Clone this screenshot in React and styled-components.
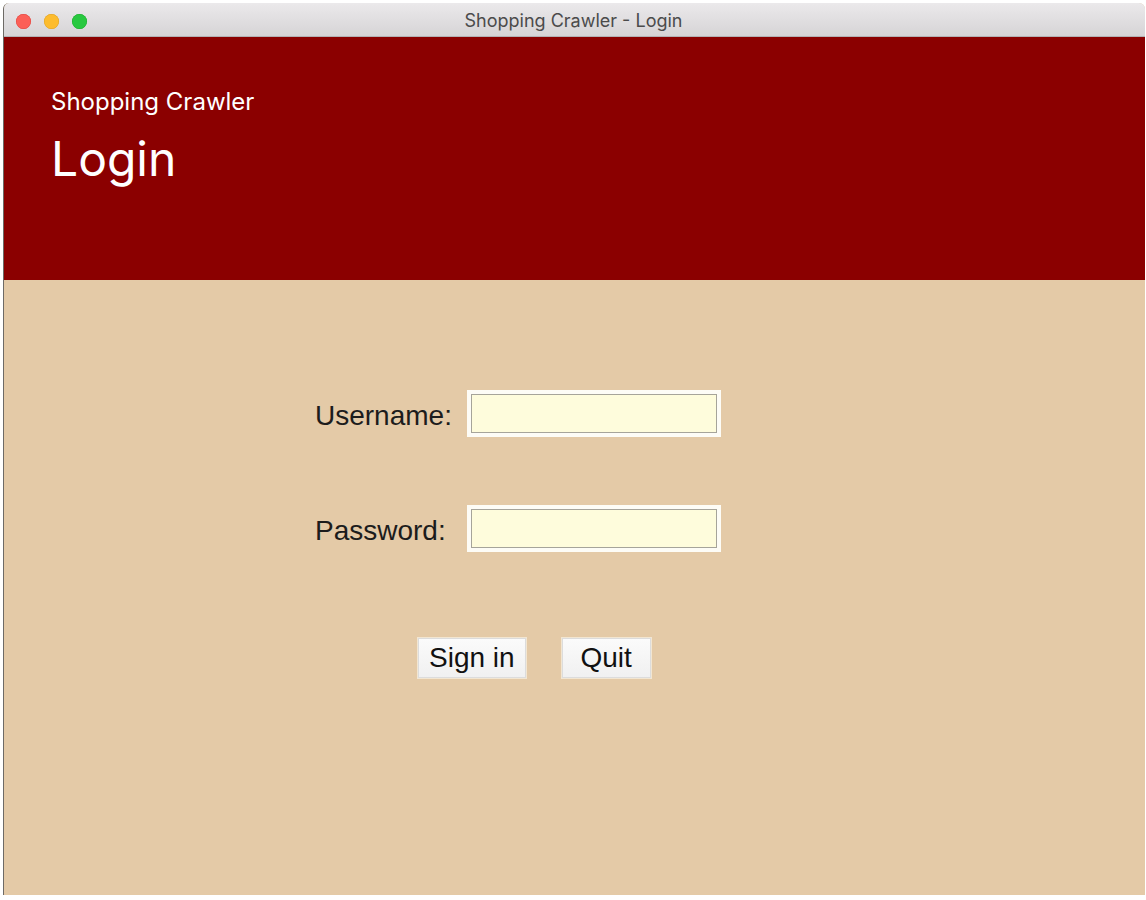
import React from 'react';
import styled, { createGlobalStyle } from 'styled-components';

const GlobalStyle = createGlobalStyle`
  html, body {
    margin: 0;
    padding: 0;
    background: #ffffff;
  }
  body {
    font-family: "Liberation Sans", Arial, sans-serif;
  }
`

const App = () => {
  return (
    <>
      <GlobalStyle />
      <Page>
        <Window>
          <TitleBar>
            <Lights>
              <Light color="#fc5f57" border="#e0443e" />
              <Light color="#fdbc2e" border="#dea123" />
              <Light color="#28c840" border="#1aab29" />
            </Lights>
            <Title>Shopping Crawler - Login</Title>
          </TitleBar>
          <Header>
            <AppName>Shopping Crawler</AppName>
            <PageTitle>Login</PageTitle>
          </Header>
          <Body>
            <Form>
              <Label>Username:</Label>
              <Field type="text" />
              <Label>Password:</Label>
              <Field type="password" />
            </Form>
            <Buttons>
              <Button>Sign in</Button>
              <Button>Quit</Button>
            </Buttons>
          </Body>
        </Window>
      </Page>
    </>
  );
};

export default App;

const Page = styled.div`
  width: 1146px;
  height: 900px;
  padding: 3px 1px 5px 3px;
  box-sizing: border-box;
`

const Window = styled.div`
  height: 100%;
  display: flex;
  flex-direction: column;
  border-left: 1px solid #6d6a66;
  border-top-left-radius: 6px;
  border-top-right-radius: 6px;
  overflow: hidden;
  background: #e4caa7;
`

const TitleBar = styled.div`
  height: 34px;
  flex-shrink: 0;
  position: relative;
  display: flex;
  align-items: center;
  justify-content: center;
  padding-top: 2px;
  background: linear-gradient(#ebe9eb, #d6d4d6);
  border-bottom: 1px solid #b4b2b4;
  box-sizing: border-box;
`

const Lights = styled.div`
  position: absolute;
  left: 12px;
  top: 11px;
  display: flex;
  gap: 13px;
`

const Light = styled.span`
  width: 15px;
  height: 15px;
  border-radius: 50%;
  background: ${props => props.color};
  box-shadow: inset 0 0 0 0.5px ${props => props.border};
`

const Title = styled.div`
  font-family: Inter, "Liberation Sans", sans-serif;
  font-size: 18px;
  color: #4b4b4b;
  margin-left: -2px;
`

const Header = styled.div`
  height: 243px;
  flex-shrink: 0;
  background: #8b0000;
  padding: 51px 0 0 47px;
  box-sizing: border-box;
  color: #ffffff;
  font-family: Inter, "Liberation Sans", sans-serif;
`

const AppName = styled.div`
  font-size: 24px;
  line-height: 28px;
`

const PageTitle = styled.div`
  font-size: 48px;
  line-height: 56px;
  margin-top: 15px;
`

const Body = styled.div`
  flex: 1;
  padding: 110px 0 0 311px;
`

const Form = styled.div`
  display: grid;
  grid-template-columns: 152px 254px;
  row-gap: 68px;
  align-items: center;
`

const Label = styled.div`
  font-size: 28px;
  color: #1c1c1c;
  padding-top: 4px;
`

const Field = styled.input`
  width: 254px;
  height: 47px;
  box-sizing: border-box;
  border: 4px solid #fdfcf6;
  outline: 1px solid #a6a49a;
  outline-offset: -5px;
  background: #fefcdc;
  padding: 0 6px;
  font-size: 20px;
`

const Buttons = styled.div`
  display: flex;
  gap: 34px;
  margin: 85px 0 0 102px;
`

const Button = styled.button`
  height: 42px;
  padding: 0 11px;
  min-width: 91px;
  font-family: "Liberation Sans", Arial, sans-serif;
  font-size: 28px;
  color: #111111;
  background: linear-gradient(#fbfbfb, #f0f0f0);
  border: 1px solid #f2e6d2;
  box-shadow: inset 0 0 0 1px #dcdcdc;
  border-radius: 0;
  cursor: pointer;
`
